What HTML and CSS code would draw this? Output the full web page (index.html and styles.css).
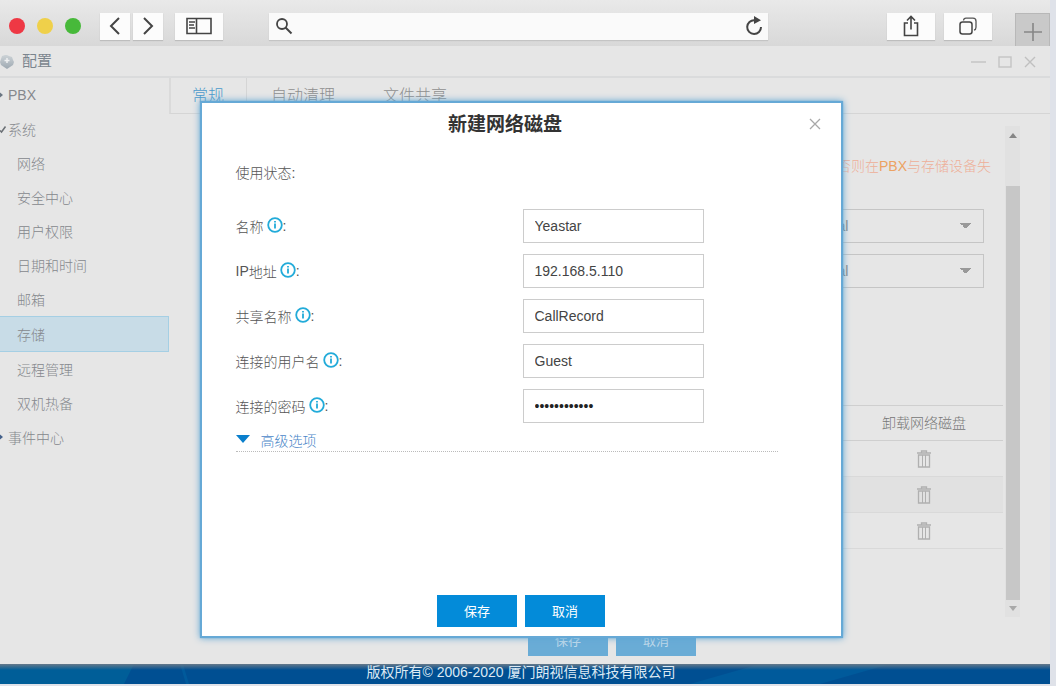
FILE: index.html
```html
<!DOCTYPE html>
<html lang="zh-CN">
<head>
<meta charset="utf-8">
<title>配置</title>
<link rel="stylesheet" href="styles.css">
</head>
<body>
<svg class="defs" aria-hidden="true">
  <symbol id="info" viewBox="0 0 16 16"><circle cx="8" cy="8" r="6.8" fill="none" stroke="#22abd9" stroke-width="1.8"/><path d="M8 4v1.5M8 6.500v5" stroke="#22abd9" stroke-width="1.8"/></symbol>
  <symbol id="trash" viewBox="0 0 14 18"><path d="M4.500 2.500V1h5v1.500M0 3h14M1.500 5h11v12h-11z" fill="none" stroke="#b0b0b0" stroke-width="1.300"/><path d="M5.500 5v12M8.500 5v12" stroke="#b0b0b0"/></symbol>
</svg>
<div class="window">
  <header class="toolbar">
    <div class="lights"><span class="light red"></span><span class="light yellow"></span><span class="light green"></span></div>
    <div class="nav">
      <button class="tool narrow" aria-label="后退"><svg width="12" height="18"><path d="M10 1 2 9l8 8" fill="none" stroke="#444" stroke-width="2"/></svg></button>
      <button class="tool narrow" aria-label="前进"><svg width="12" height="18"><path d="m2 1 8 8-8 8" fill="none" stroke="#444" stroke-width="2"/></svg></button>
    </div>
    <button class="tool" aria-label="边栏"><svg width="26" height="18"><path d="M1 1.5h24v15H1zM10.5 1.5v15M3 5h6M3 8h5M3 11h6" fill="none" stroke="#444" stroke-width="1.6"/></svg></button>
    <div class="address">
      <svg width="18" height="18"><circle cx="7" cy="7" r="5" fill="none" stroke="#444" stroke-width="1.8"/><path d="m10.5 10.5 6 6" stroke="#444" stroke-width="2"/></svg>
      <input class="url" type="text" aria-label="地址">
      <button class="reload" aria-label="刷新"><svg width="18" height="20"><path d="M9.5 4.2A6.9 6.9 0 1 0 16 11" fill="none" stroke="#444" stroke-width="2"/><path d="m9 0 7 4.2L9 8z" fill="#444"/></svg></button>
    </div>
    <div class="actions">
      <button class="tool" aria-label="分享"><svg width="16" height="22"><path d="M5 8H1.5v12.5h13V8H11M8 14.5V2M4 5.5 8 1.500l4 4" fill="none" stroke="#444" stroke-width="1.6"/></svg></button>
      <button class="tool" aria-label="标签页"><svg width="18" height="18"><rect x="1" y="5" width="12" height="12" rx="2.500" fill="none" stroke="#444" stroke-width="1.5"/><path d="M4.500 3.500Q4.700 1.200 7 1.200h7q3 0 3 3v6q0 2.500-2 3" fill="none" stroke="#555" stroke-width="1.3"/></svg></button>
    </div>
    <button class="newtab" aria-label="新标签页"><svg width="18" height="18"><path d="M9 0v18M0 9h18" stroke="#868686" stroke-width="1.6"/></svg></button>
  </header>

  <div class="titlebar">
    <svg width="15" height="16" viewBox="0 0 15 16"><defs><linearGradient id="orb" x2="0" y2="1"><stop stop-color="#cdd3d7"/><stop offset="1" stop-color="#9da8b1"/></linearGradient></defs><path d="M7 1l2 1 3 1 1 3 1 2-1 3-3 2-3 2-3-2-3-2-1-3 1-3 1-3 3-1z" fill="url(#orb)"/><path d="M7 4v5M4.500 6.500h5" stroke="#eef0f1" stroke-width="1.500"/></svg>
    <span class="app-name">配置</span>
    <div class="controls">
      <button class="plain" aria-label="最小化"><svg width="15" height="12"><path d="M0 6h15" stroke="#c4c4c4" stroke-width="1.500"/></svg></button>
      <button class="plain" aria-label="最大化"><svg width="14" height="12"><rect x="1" y="1" width="12" height="10" fill="none" stroke="#c4c4c4" stroke-width="1.400"/></svg></button>
      <button class="plain" aria-label="关闭"><svg width="12" height="12"><path d="m1 1 10 10M11 1 1 11" stroke="#c0c0c0" stroke-width="1.400"/></svg></button>
    </div>
  </div>

  <div class="body">
    <nav class="sidebar">
      <a class="item top" href="#"><svg class="mark" width="8" height="10"><path d="M0 2.500 3 5 0 7.500z" fill="#6b7682"/></svg>PBX</a>
      <a class="item top" href="#"><svg class="mark" width="8" height="10"><path d="M0 6.500 1.500 8 5.500 2.500" fill="none" stroke="#6b7075" stroke-width="1.500"/></svg>系统</a>
      <a class="item" href="#">网络</a>
      <a class="item" href="#">安全中心</a>
      <a class="item" href="#">用户权限</a>
      <a class="item" href="#">日期和时间</a>
      <a class="item" href="#">邮箱</a>
      <a class="item current" href="#">存储</a>
      <a class="item" href="#">远程管理</a>
      <a class="item" href="#">双机热备</a>
      <a class="item top" href="#"><svg class="mark" width="8" height="10"><path d="M0 2.500 3 5 0 7.500z" fill="#44618a"/></svg>事件中心</a>
    </nav>
    <main class="main">
      <div class="tabs">
        <a class="tab active" href="#">常规</a><a class="tab" href="#">自动清理</a><a class="tab" href="#">文件共享</a>
      </div>
      <div class="panel">
        <div class="content">
          <p class="warning">否则在<span class="strong">PBX</span>与存储设备失</p>
          <div class="selects">
            <select class="select" aria-label="存储位置一"><option>Local</option></select>
            <select class="select" aria-label="存储位置二"><option>Local</option></select>
          </div>
          <table class="disks">
            <thead><tr><th></th><th class="unmount">卸载网络磁盘</th></tr></thead>
            <tbody>
              <tr><td></td><td><button class="plain" aria-label="卸载"><svg width="14" height="18"><use href="#trash"/></svg></button></td></tr>
              <tr><td></td><td><button class="plain" aria-label="卸载"><svg width="14" height="18"><use href="#trash"/></svg></button></td></tr>
              <tr><td></td><td><button class="plain" aria-label="卸载"><svg width="14" height="18"><use href="#trash"/></svg></button></td></tr>
            </tbody>
          </table>
        </div>
        <div class="scrollbar">
          <svg class="up" width="8" height="5"><path d="M0 5 4 0l4 5z" fill="#858585"/></svg>
          <div class="thumb"></div>
          <svg class="down" width="8" height="5"><path d="M0 0h8L4 5z" fill="#a8a8a8"/></svg>
        </div>
      </div>
      <div class="page-buttons"><button class="btn faded">保存</button><button class="btn faded">取消</button></div>
    </main>
  </div>

  <footer class="footer">
    <svg class="footer-art" viewBox="0 0 1050 20" preserveAspectRatio="none" aria-hidden="true"><path d="M0 0h134l-10 20H0z" fill="#005e98"/><path d="M180 0l6 20h3L183 0zM760 0h130l-70 20H690z" fill="#005a9b"/></svg>
    <span class="copyright">版权所有© 2006-2020 厦门朗视信息科技有限公司</span>
  </footer>

  <div class="overlay">
    <form class="dialog" role="dialog" aria-labelledby="dialog-title">
      <div class="dialog-head">
        <h1 class="dialog-title" id="dialog-title">新建网络磁盘</h1>
        <button class="plain" type="button" aria-label="关闭"><svg width="12" height="12"><path d="m1 1 10 10M11 1 1 11" stroke="#a8a8a8" stroke-width="1.300"/></svg></button>
      </div>
      <div class="dialog-body">
        <div class="status">使用状态:</div>
        <div class="fields">
          <div class="field"><label class="label" for="name">名称<svg class="info"><use href="#info"/></svg>:</label><input class="input" id="name" type="text" value="Yeastar"></div>
          <div class="field"><label class="label" for="ip"><span class="strong">IP</span>地址<svg class="info"><use href="#info"/></svg>:</label><input class="input" id="ip" type="text" value="192.168.5.110"></div>
          <div class="field"><label class="label" for="share">共享名称<svg class="info"><use href="#info"/></svg>:</label><input class="input" id="share" type="text" value="CallRecord"></div>
          <div class="field"><label class="label" for="user">连接的用户名<svg class="info"><use href="#info"/></svg>:</label><input class="input" id="user" type="text" value="Guest"></div>
          <div class="field"><label class="label" for="pass">连接的密码<svg class="info"><use href="#info"/></svg>:</label><input class="input password" id="pass" type="password" value="yeastar12345"></div>
        </div>
        <button class="advanced" type="button"><svg width="14" height="9"><path d="M0 0h14L7 8z" fill="#0a7fcc"/></svg>高级选项</button>
      </div>
      <div class="dialog-buttons"><button class="btn" type="button">保存</button><button class="btn" type="button">取消</button></div>
    </form>
  </div>
</div>
</body>
</html>
```
FILE: styles.css
```css
* { box-sizing: border-box; }
body {
  margin: 0;
  padding: 0 6px 2px 0;
  background: #dfe2e9;
  font-family: "Liberation Sans", "Noto Sans CJK SC", sans-serif;
  font-size: 14px;
  font-weight: 300;
  color: #555;
}
button, input, select { font: inherit; color: inherit; }
button { border: 0; padding: 0; cursor: pointer; }
a { color: inherit; text-decoration: none; }
svg { display: block; flex: none; }
.defs { display: none; }
.plain { background: none; }
.strong { font-weight: 400; }

.window {
  position: relative;
  display: flex;
  flex-direction: column;
  min-height: calc(100vh - 2px);
  background: #e6e6e6;
}

.toolbar {
  display: flex;
  align-items: center;
  height: 46px;
  padding: 6px 0 0 9px;
  background: linear-gradient(#e9e9e9, #d8d8d8);
}
.lights { display: flex; gap: 12px; margin-right: 19px; }
.light { width: 16px; height: 16px; border-radius: 50%; }
.red { background: #ee3844; }
.yellow { background: #efd04a; }
.green { background: #47b93a; }
.nav { display: flex; gap: 3px; margin-right: 12px; }
.tool {
  display: flex;
  align-items: center;
  justify-content: center;
  width: 48px;
  height: 27px;
  background: #fcfcfc;
  box-shadow: 0 1px 1px #bdbdbd;
}
.narrow { width: 30px; }
.address {
  display: flex;
  align-items: center;
  flex: 1;
  height: 27px;
  margin: 0 119px 0 46px;
  padding: 0 5px 0 6px;
  background: #fafafa;
  box-shadow: 0 1px 1px #c4c4c4;
}
.url { flex: 1; min-width: 0; border: 0; background: none; outline: 0; }
.reload { background: none; }
.actions { display: flex; gap: 9px; }
.newtab {
  display: flex;
  align-items: center;
  justify-content: center;
  align-self: flex-end;
  width: 35px;
  height: 33px;
  margin-left: 23px;
  padding-top: 4px;
  background: #c9c9c9;
  border: 1px solid #b8b8b8;
  border-bottom: 0;
}

.titlebar {
  display: flex;
  align-items: center;
  gap: 7px;
  height: 32px;
  padding: 2px 14px 0 0;
  border-bottom: 2px solid #dadbdc;
}
.app-name { line-height: 24px; margin-bottom: 2px; font-size: 15px; font-weight: 400; color: #7b858e; }
.controls { display: flex; gap: 12px; margin-left: auto; }

.body { display: flex; flex: 1; }
.sidebar { width: 169px; color: #85888d; }
.item { display: flex; align-items: center; height: 34px; padding-left: 17px; }
.top { padding-left: 0; }
.current { height: 36px; background: #c8dce7; border: 1px solid #a5cfe4; border-left: 0; }

.main { display: flex; flex: 1; flex-direction: column; min-width: 0; padding-bottom: 8px; }
.tabs { display: flex; height: 36px; border-bottom: 1px solid #d5d5d5; border-left: 2px solid #dadada; font-size: 16px; color: #8f8f8f; }
.tab { padding: 0 24px; line-height: 36px; }
.active { padding: 0 22px 0 21px; color: #4b9acb; border-right: 1px solid #d5d5d5; }
.panel { display: flex; flex: 1; margin: 12px 30px 7px 0; }
.content { display: flex; flex: 1; flex-direction: column; margin: 0 2px 0 66px; padding-top: 29px; }
.warning { margin: 0; padding-right: 12px; line-height: 22px; text-align: right; color: #eeaf98; }
.warning .strong { color: #eca263; }
.selects { display: flex; flex-direction: column; align-items: flex-end; gap: 11px; padding: 32px 19px 0 0; }
.select {
  appearance: none;
  width: 181px;
  height: 34px;
  padding: 0 11px;
  border: 1px solid #c5c5c5;
  border-radius: 0;
  background-color: transparent;
  background-image: linear-gradient(to top right, transparent 50%, #999 50%), linear-gradient(to top left, transparent 50%, #999 50%);
  background-position: right 17px center, right 11px center;
  background-size: 6px 6px;
  background-repeat: no-repeat;
  font-weight: 400;
  color: #888;
}
.disks { width: 100%; margin-top: 117px; border-collapse: collapse; }
.disks th { height: 35px; padding: 0 0 3px; border: solid #cfcfcf; border-width: 1px 0; font-weight: 300; color: #777; }
.disks .unmount { width: 158px; }
.disks td { height: 36px; padding: 0; border-bottom: 1px solid #d9d9d9; text-align: center; }
.disks tr:nth-child(even) td { background: #e1e1e1; }
.disks .plain { display: inline-block; vertical-align: middle; }
.scrollbar { display: flex; flex-direction: column; align-items: center; width: 15px; background: #e1e1e1; }
.up { margin: 7px 0 48px; }
.thumb { flex: 1; width: 14px; background: #c7c7c7; }
.down { margin: 6px 0; }
.page-buttons { display: flex; justify-content: center; gap: 8px; margin-left: 5px; }

.btn { width: 80px; height: 32px; padding-bottom: 2px; background: #038bd9; color: #fff; font-size: 13px; font-weight: 400; }
.faded { background: #6aacd6; color: #c2dbea; }

.footer {
  position: relative;
  height: 20px;
  padding-right: 8px;
  background: #004f92;
  line-height: 17px;
  text-align: center;
  font-weight: 400;
  color: #dce9f3;
}
.footer::after {
  content: "";
  position: absolute;
  inset: 0 0 auto;
  height: 6px;
  background: linear-gradient(#66798a, transparent);
}
.footer-art { position: absolute; inset: 0; width: 100%; height: 100%; }
.copyright { position: relative; z-index: 1; }

.overlay {
  position: absolute;
  inset: 0;
  display: flex;
  align-items: flex-start;
  justify-content: center;
  padding: 103px 8px 0 0;
}
.dialog {
  width: 639px;
  padding-bottom: 9px;
  background: #fff;
  box-shadow: 0 0 1px 2px #66a9d6, 0 0 7px 2px #5ca4d4;
}
.dialog-head { display: flex; align-items: center; height: 42px; padding-right: 20px; }
.dialog-title { flex: 1; margin: 0; padding-bottom: 4px; text-align: center; font-size: 19px; font-weight: 700; color: #333; }
.dialog-body { padding: 16px 63px 0 34px; }
.status { height: 48px; line-height: 24px; }
.fields { display: flex; flex-direction: column; gap: 11px; }
.field { display: flex; align-items: center; }
.label { display: flex; align-items: center; width: 287px; }
.info { width: 16px; height: 16px; margin: 0 0 3px 3px; }
.input {
  width: 181px;
  height: 34px;
  padding: 0 11px;
  border: 1px solid #ccc;
  background: #fff;
  font-weight: 400;
  color: #444;
}
.password { color: #222; }
.advanced {
  display: flex;
  align-items: center;
  gap: 11px;
  width: 100%;
  height: 29px;
  padding-top: 5px;
  border-bottom: 1px dotted #bbb;
  background: none;
  color: #4a86c8;
}
.dialog-buttons { display: flex; justify-content: center; gap: 8px; margin-top: 143px; }
```
